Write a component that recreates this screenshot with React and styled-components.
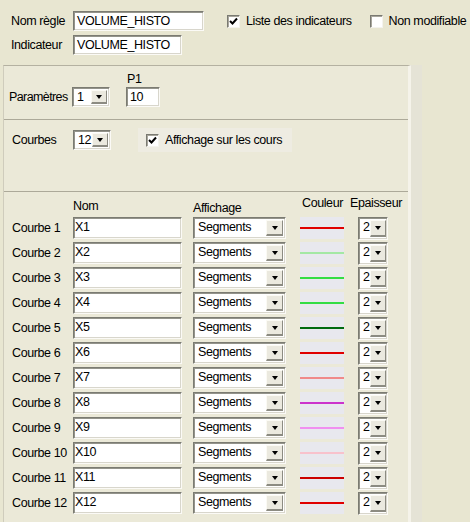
import React from 'react'
import styled, { createGlobalStyle } from 'styled-components'

const GlobalStyle = createGlobalStyle`
  html, body {
    margin: 0;
    padding: 0;
    background: #e8e6d1;
  }
  body {
    font-family: "Liberation Sans", Arial, sans-serif;
    font-size: 12.5px;
    letter-spacing: -0.4px;
    color: #000;
  }
`

const curves = [
  { id: 1, color: '#e00000' },
  { id: 2, color: '#a4e8a4' },
  { id: 3, color: '#33dd44' },
  { id: 4, color: '#33dd44' },
  { id: 5, color: '#006a10' },
  { id: 6, color: '#e00000' },
  { id: 7, color: '#f08a8a' },
  { id: 8, color: '#cc33cc' },
  { id: 9, color: '#f090f0' },
  { id: 10, color: '#f8c2cc' },
  { id: 11, color: '#cc0000' },
  { id: 12, color: '#e00000' },
]

const Page = styled.div`
  width: 470px;
  height: 522px;
  overflow: hidden;
`

const Top = styled.div`
  padding: 11px 0 0 11px;
  height: 54px;
  display: flex;
  flex-direction: column;
  gap: 4px;
`

const Row = styled.div`
  display: flex;
  align-items: center;
  gap: ${(p) => p.gap || 0}px;
`

const Label = styled.span`
  width: ${(p) => (p.w ? `${p.w}px` : 'auto')};
  flex-shrink: 0;
  white-space: nowrap;
  letter-spacing: ${(p) => (p.tight ? '-0.6px' : 'inherit')};
`

const Field = styled.div`
  box-sizing: border-box;
  flex-shrink: 0;
  width: ${(p) => p.w}px;
  height: ${(p) => p.h || 20}px;
  background: #fff;
  border-top: 1px solid #7b7b72;
  border-left: 1px solid #7b7b72;
  border-bottom: 1px solid #fbfaf6;
  border-right: 1px solid #fbfaf6;
  box-shadow: inset 1px 1px 0 #94948b, inset -1px -1px 0 #d8d6cc;
  padding: 2px 0 0 ${(p) => p.pl ?? 3}px;
  line-height: 14px;
  white-space: nowrap;
  overflow: hidden;
`

const SelectBox = styled(Field)`
  display: flex;
  align-items: stretch;
  padding: 2px;
  line-height: normal;
`

const SelectValue = styled.span`
  flex: 1;
  padding: 0 0 0 2px;
  line-height: 15px;
  white-space: nowrap;
`

const DropButton = styled.span`
  box-sizing: border-box;
  width: ${(p) => p.bw || 17}px;
  flex-shrink: 0;
  background: #ebe9df;
  border-top: 1px solid #fbfaf4;
  border-left: 1px solid #fbfaf4;
  border-right: 1px solid #8c8b82;
  border-bottom: 2px solid #8c8b82;
  display: flex;
  align-items: center;
  justify-content: center;
  &::after {
    content: '';
    margin-top: 1px;
    border-left: 3.5px solid transparent;
    border-right: 3.5px solid transparent;
    border-top: 4px solid #000;
  }
`

const Select = ({ value, w, h, bw }) => (
  <SelectBox w={w} h={h}>
    <SelectValue>{value}</SelectValue>
    <DropButton bw={bw} />
  </SelectBox>
)

const CheckWrap = styled.span`
  display: inline-flex;
  align-items: center;
  gap: 6px;
  white-space: nowrap;
  flex-shrink: 0;
  margin-left: ${(p) => p.ml || 0}px;
  padding: ${(p) => (p.boxed ? '5px 10px 5px 8px' : 0)};
  background: ${(p) => (p.boxed ? '#eeece2' : 'transparent')};
`

const CheckBox = styled.span`
  box-sizing: border-box;
  width: 13px;
  height: 13px;
  background: #fff;
  border-top: 1px solid #7a7a72;
  border-left: 1px solid #7a7a72;
  border-bottom: 1px solid #f4f3ee;
  border-right: 1px solid #f4f3ee;
  box-shadow: inset 1px 1px 0 #a8a69c;
  display: flex;
  align-items: center;
  justify-content: center;
`

const Check = ({ checked, children, ml, boxed }) => (
  <CheckWrap ml={ml} boxed={boxed}>
    <CheckBox>
      {checked && (
        <svg width="9" height="9" viewBox="0 0 9 9">
          <path d="M1 4 L3.5 6.5 L8 1.5" fill="none" stroke="#000" strokeWidth="2" />
        </svg>
      )}
    </CheckBox>
    {children}
  </CheckWrap>
)

const Body = styled.div`
  display: flex;
  align-items: stretch;
`

const Panel = styled.div`
  margin-left: 3px;
  width: 404px;
  height: 457px;
  background: #ebe9d8;
  border-top: 1px solid #b4b1a1;
  border-left: 1px solid #cfccbc;
  border-right: 3px solid #f5f3ea;
`

const Gutter = styled.div`
  width: 11px;
  background: #e5e3d6;
`

const Section = styled.div`
  border-bottom: ${(p) => (p.last ? 'none' : '1px solid #aca999')};
  height: ${(p) => p.h}px;
  box-sizing: border-box;
  padding: ${(p) => p.pad};
`

const ParamGrid = styled.div`
  display: grid;
  grid-template-columns: 63px 54px 34px;
  grid-template-rows: 12px 20px;
  row-gap: 2px;
  align-items: center;
`

const P1 = styled.span`
  grid-column: 3;
  padding-left: 1px;
`

const Table = styled.div`
  display: grid;
  grid-template-columns: 61px 120px 107px 58px 30px;
  grid-template-rows: 18px;
  grid-auto-rows: 22px;
  row-gap: 3px;
  align-items: center;
`

const Head = styled.span`
  margin-top: ${(p) => p.dy || 0}px;
  margin-left: ${(p) => p.dx || 0}px;
  white-space: nowrap;
`

const ColorCell = styled.span`
  width: 44px;
  height: 22px;
  background: #e8e8ee;
  display: flex;
  align-items: center;
`

const ColorLine = styled.span`
  width: 44px;
  height: 2px;
  background: ${(p) => p.color};
`

export default function App() {
  return (
    <Page>
      <GlobalStyle />
      <Top>
        <Row>
          <Label w={62}>Nom règle</Label>
          <Field w={131}>VOLUME_HISTO</Field>
          <Check checked ml={23}>Liste des indicateurs</Check>
          <Check ml={18}>Non modifiable</Check>
        </Row>
        <Row>
          <Label w={62}>Indicateur</Label>
          <Field w={109}>VOLUME_HISTO</Field>
        </Row>
      </Top>
      <Body>
        <Panel>
          <Section h={54} pad="7px 0 0 5px">
            <ParamGrid>
              <P1>P1</P1>
              <Label tight>Paramètres</Label>
              <Select value="1" w={38} h={20} bw={16} />
              <Field w={34} h={20}>10</Field>
            </ParamGrid>
          </Section>
          <Section h={72} pad="8px 0 0 8px">
            <Row>
              <Label w={61}>Courbes</Label>
              <Select value="12" w={38} h={20} bw={16} />
              <Check checked ml={27} boxed>Affichage sur les cours</Check>
            </Row>
          </Section>
          <Section last h={330} pad="4px 0 0 8px">
            <Table>
              <span />
              <Head dy={2}>Nom</Head>
              <Head dy={5}>Affichage</Head>
              <Head dy={-5} dx={2}>Couleur</Head>
              <Head dy={-5} dx={-8}>Epaisseur</Head>
              {curves.map((c) => (
                <React.Fragment key={c.id}>
                  <Label>Courbe {c.id}</Label>
                  <Field w={109} h={22} pl={1}>X{c.id}</Field>
                  <Select value="Segments" w={93} h={22} />
                  <ColorCell>
                    <ColorLine color={c.color} />
                  </ColorCell>
                  <Select value="2" w={30} h={23} bw={16} />
                </React.Fragment>
              ))}
            </Table>
          </Section>
        </Panel>
        <Gutter />
      </Body>
    </Page>
  )
}
